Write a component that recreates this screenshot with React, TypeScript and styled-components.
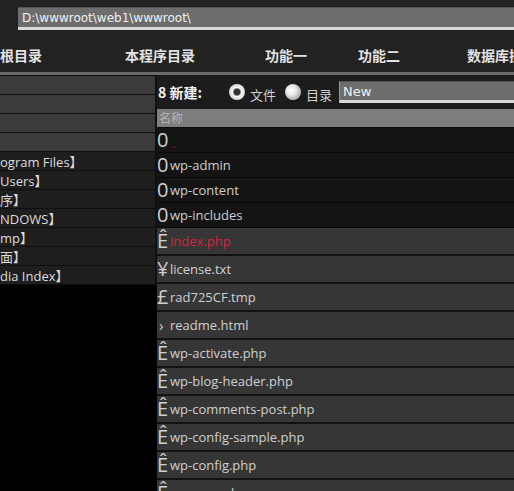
import styled, { createGlobalStyle } from 'styled-components';

const GlobalStyle = createGlobalStyle`
  html, body {
    margin: 0;
    padding: 0;
    background: #000;
    overflow: hidden;
  }
  * {
    box-sizing: border-box;
  }
`;

const navItems = [
  { label: '根目录', width: 125 },
  { label: '本程序目录', width: 140 },
  { label: '功能一', width: 93 },
  { label: '功能二', width: 109 },
  { label: '数据库操作', width: 120 },
];

const drives = [
  { text: '', light: true },
  { text: '', light: true },
  { text: '', light: true },
  { text: '', light: true },
  { text: 'ogram Files】' },
  { text: 'Users】' },
  { text: '序】' },
  { text: 'NDOWS】' },
  { text: 'mp】' },
  { text: '面】' },
  { text: 'dia Index】' },
];

const folders = ['wp-admin', 'wp-content', 'wp-includes'];

const files = [
  { icon: 'Ê', name: 'index.php', hot: true },
  { icon: '¥', name: 'license.txt' },
  { icon: '£', name: 'rad725CF.tmp' },
  { icon: '›', name: 'readme.html', small: true },
  { icon: 'Ê', name: 'wp-activate.php' },
  { icon: 'Ê', name: 'wp-blog-header.php' },
  { icon: 'Ê', name: 'wp-comments-post.php' },
  { icon: 'Ê', name: 'wp-config-sample.php' },
  { icon: 'Ê', name: 'wp-config.php' },
  { icon: 'Ê', name: 'wp-cron.php' },
];

const App = () => {
  return (
    <Page>
      <GlobalStyle />
      <TopBar>
        <PathInput defaultValue="D:\wwwroot\web1\wwwroot\" />
      </TopBar>

      <Nav>
        {navItems.map((item) => (
          <NavItem key={item.label} $width={item.width}>
            {item.label}
          </NavItem>
        ))}
      </Nav>

      <Main>
        <Sidebar>
          {drives.map((d, i) => (
            <DriveRow key={i} $light={d.light}>
              {d.text}
            </DriveRow>
          ))}
        </Sidebar>

        <Content>
          <NewRow>
            <NewLabel>8 新建:</NewLabel>
            <Radio $checked />
            <RadioLabel>文件</RadioLabel>
            <Radio />
            <RadioLabel>目录</RadioLabel>
            <NameInput defaultValue="New" />
          </NewRow>

          <HeaderRow>名称</HeaderRow>

          <DirRow>
            <Icon>0</Icon>
            <UpLink>..</UpLink>
          </DirRow>
          {folders.map((f) => (
            <DirRow key={f}>
              <Icon>0</Icon>
              <Name>{f}</Name>
            </DirRow>
          ))}

          {files.map((f) => (
            <FileRow key={f.name}>
              <Icon $small={f.small}>{f.icon}</Icon>
              <Name $hot={f.hot}>{f.name}</Name>
            </FileRow>
          ))}
        </Content>
      </Main>
    </Page>
  );
};

const Page = styled.div`
  width: 514px;
  height: 491px;
  overflow: hidden;
  background: #000;
  font-family: 'Open Sans', 'Noto Sans CJK SC', sans-serif;
`;

const TopBar = styled.div`
  height: 37px;
  background: #222;
  padding: 7px 0 0 18px;
`;

const PathInput = styled.input`
  display: block;
  width: 520px;
  height: 23px;
  margin: 0;
  padding: 0 0 0 4px;
  border: none;
  border-top: 1px solid #555;
  border-bottom: 3px solid #d8d8d8;
  background: #6d6d6d;
  color: #f0f0f0;
  font-family: 'DejaVu Sans', sans-serif;
  font-size: 12px;
  outline: none;
`;

const Nav = styled.div`
  display: flex;
  height: 38px;
  background: #222;
  border-bottom: 3px solid #6a6a6a;
  white-space: nowrap;
`;

const NavItem = styled.div<{ $width: number }>`
  flex: 0 0 ${(p) => p.$width}px;
  line-height: 36px;
  color: #e2e2e2;
  font-family: 'Noto Sans CJK SC', sans-serif;
  font-size: 14px;
  font-weight: 700;
`;

const Main = styled.div`
  display: flex;
  align-items: flex-start;
`;

const Sidebar = styled.div`
  flex: 0 0 157px;
  border-top: 1px solid #0e0e0e;
  border-right: 2px solid #101010;
`;

const DriveRow = styled.div<{ $light?: boolean }>`
  height: 19px;
  line-height: 20px;
  border-bottom: 1px solid #0e0e0e;
  background: ${(p) => (p.$light ? '#3b3b3b' : '#1e1e1e')};
  color: #dcdcdc;
  font-size: 13px;
  white-space: nowrap;
  overflow: hidden;
`;

const Content = styled.div`
  flex: 1;
  min-width: 0;
`;

const NewRow = styled.div`
  display: flex;
  align-items: center;
  height: 34px;
  background: #1c1c1c;
  padding-left: 1px;
  white-space: nowrap;
`;

const NewLabel = styled.span`
  color: #f2f2f2;
  font-family: 'Noto Sans CJK SC', sans-serif;
  font-size: 14px;
  font-weight: 700;
  margin-right: 27px;
`;

const Radio = styled.span<{ $checked?: boolean }>`
  display: inline-block;
  flex: 0 0 16px;
  width: 16px;
  height: 16px;
  border-radius: 50%;
  background: ${(p) =>
    p.$checked
      ? 'radial-gradient(circle, #333 0 3px, #888 3.5px, #f4f4f4 4.5px, #d8d8d8 8px)'
      : 'radial-gradient(circle at 40% 40%, #ffffff 0, #e6e6e6 5px, #bdbdbd 8px)'};
  margin-right: 5px;
`;

const RadioLabel = styled.span`
  color: #d0d0d0;
  font-family: 'Noto Sans CJK SC', sans-serif;
  font-size: 13px;
  margin-right: 9px;
  padding-top: 5px;
`;

const NameInput = styled.input`
  flex: 1;
  min-width: 0;
  height: 22px;
  margin: 0 0 0 -2px;
  padding: 0 0 0 3px;
  border: none;
  border-top: 1px solid #555;
  border-left: 1px solid #999;
  border-bottom: 3px solid #d8d8d8;
  background: #6d6d6d;
  color: #f0f0f0;
  font-family: 'DejaVu Sans', sans-serif;
  font-size: 13px;
  outline: none;
`;

const HeaderRow = styled.div`
  height: 19px;
  line-height: 18px;
  background: #7e7e7e;
  border-bottom: 1px solid #0a0a0a;
  color: #b4b4b4;
  font-family: 'Noto Sans CJK SC', sans-serif;
  font-size: 12px;
  padding-left: 2px;
`;

const DirRow = styled.div`
  display: flex;
  align-items: center;
  height: 25px;
  background: #141414;
  border-bottom: 1px solid #080808;
  white-space: nowrap;
`;

const FileRow = styled.div`
  display: flex;
  align-items: center;
  height: 28px;
  background: #363636;
  border-bottom: 2px solid #121212;
  white-space: nowrap;
`;

const Icon = styled.span<{ $small?: boolean }>`
  display: inline-block;
  flex: 0 0 13px;
  padding-left: ${(p) => (p.$small ? 2 : 0)}px;
  color: #cfcfcf;
  font-family: 'Open Sans', sans-serif;
  font-size: ${(p) => (p.$small ? 15 : 20)}px;
  line-height: 1;
  overflow: visible;
`;

const Name = styled.span<{ $hot?: boolean }>`
  color: ${(p) => (p.$hot ? '#d0253a' : '#cfcfcf')};
  font-size: 13px;
`;

const UpLink = styled.span`
  color: #9a1818;
  font-size: 10px;
  margin-left: 1px;
  padding-top: 8px;
`;

export default App;
